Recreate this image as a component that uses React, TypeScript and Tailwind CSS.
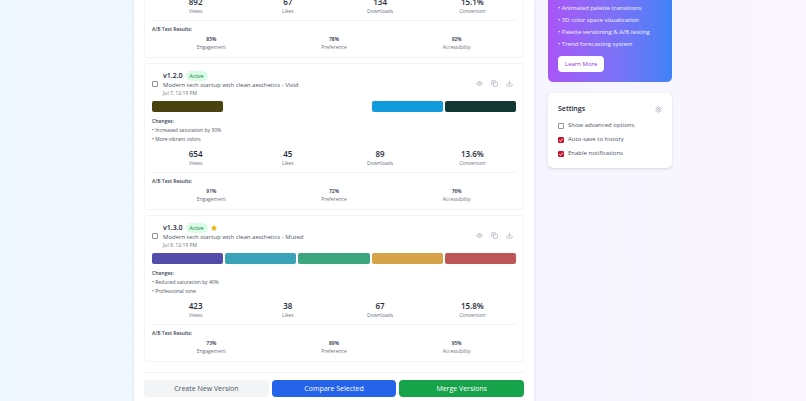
import React from 'react';
import { Copy, Download, Eye, Settings, Star } from 'lucide-react';

interface Metric {
  label: string;
  value: string;
}

interface Version {
  id: string;
  description: string;
  date: string;
  starred: boolean;
  colors: string[];
  changes: string[];
  metrics: Metric[];
  results: Metric[];
}

const toMetrics = (labels: string[], values: string[]): Metric[] =>
  labels.map((label, i) => ({ label, value: values[i] }));

const METRIC_LABELS = ['Views', 'Likes', 'Downloads', 'Conversion'];
const RESULT_LABELS = ['Engagement', 'Preference', 'Accessibility'];

const PREVIOUS = {
  metrics: toMetrics(METRIC_LABELS, ['892', '67', '134', '15.1%']),
  results: toMetrics(RESULT_LABELS, ['85%', '78%', '92%']),
};

const VERSIONS: Version[] = [
  {
    id: 'v1.2.0',
    description: 'Modern tech startup with clean aesthetics - Vivid',
    date: 'Jul 7, 12:19 PM',
    starred: false,
    colors: ['bg-[#4a420f]', 'bg-white', 'bg-white', 'bg-[#0f9bdc]', 'bg-[#123833]'],
    changes: ['Increased saturation by 30%', 'More vibrant colors'],
    metrics: toMetrics(METRIC_LABELS, ['654', '45', '89', '13.6%']),
    results: toMetrics(RESULT_LABELS, ['91%', '72%', '76%']),
  },
  {
    id: 'v1.3.0',
    description: 'Modern tech startup with clean aesthetics - Muted',
    date: 'Jul 9, 12:19 PM',
    starred: true,
    colors: ['bg-[#544caa]', 'bg-[#3aa2b6]', 'bg-[#3ca47f]', 'bg-[#d7a348]', 'bg-[#bd5757]'],
    changes: ['Reduced saturation by 40%', 'Professional tone'],
    metrics: toMetrics(METRIC_LABELS, ['423', '38', '67', '15.8%']),
    results: toMetrics(RESULT_LABELS, ['73%', '89%', '95%']),
  },
];

const FEATURES = [
  'Animated palette transitions',
  '3D color space visualization',
  'Palette versioning & A/B testing',
  'Trend forecasting system',
];

const OPTIONS = [
  { label: 'Show advanced options', checked: false },
  { label: 'Auto-save to history', checked: true },
  { label: 'Enable notifications', checked: true },
];

const ACTIONS = [
  { label: 'Preview', Icon: Eye },
  { label: 'Copy', Icon: Copy },
  { label: 'Download', Icon: Download },
];

const CheckBox: React.FC<{ id: string; label?: string; defaultChecked?: boolean }> = ({ id, label, defaultChecked }) => (
  <span className="relative flex shrink-0">
    <input
      id={id}
      type="checkbox"
      aria-label={label}
      defaultChecked={defaultChecked}
      className="peer size-[6px] appearance-none rounded-[1px] border border-[#8f8f8f] bg-white checked:border-[#c8102a] checked:bg-[#c8102a]"
    />
    <svg className="pointer-events-none absolute inset-0 hidden size-[6px] text-white peer-checked:block" fill="none" viewBox="0 0 12 12" stroke="currentColor">
      <path strokeWidth={2} d="M2.5 6.5l2.5 2.5 4.5-5.5" />
    </svg>
  </span>
);

const Stats: React.FC<{ metrics: Metric[]; results: Metric[] }> = ({ metrics, results }) => (
  <>
    <div className="grid grid-cols-4 gap-[5px] text-center">
      {metrics.map((m) => (
        <div key={m.label}>
          <div className="text-[8px] leading-[11px] font-semibold text-gray-800">{m.value}</div>
          <div className="text-[5px] leading-[8px] text-gray-500">{m.label}</div>
        </div>
      ))}
    </div>
    <div className="mt-[5px] border-t border-gray-100 pt-[4px]">
      <h4 className="text-[5px] leading-[8px] font-semibold text-gray-700">A/B Test Results:</h4>
      <div className="mt-[2px] grid grid-cols-3 gap-[4px] text-center text-[5px] leading-[8px]">
        {results.map((r) => (
          <div key={r.label}>
            <div className="font-semibold text-gray-800">{r.value}</div>
            <div className="text-gray-500">{r.label}</div>
          </div>
        ))}
      </div>
    </div>
  </>
);

const VersionCard: React.FC<{ version: Version }> = ({ version }) => (
  <article className="rounded-[4px] border border-gray-100 px-[7px] py-[6px]">
    <div className="flex items-center justify-between">
      <div className="flex items-center gap-[5px]">
        <CheckBox id={version.id} label={version.id} />
        <div>
          <div className="flex h-[11px] items-center gap-[3px]">
            <h3 className="text-[7px] leading-[11px] font-semibold text-gray-800">{version.id}</h3>
            <span className="rounded-full bg-green-100 px-[4px] text-[5px] leading-[10px] text-green-700">Active</span>
            {version.starred && <Star className="size-[6px] fill-[#eab308] text-[#eab308]" />}
          </div>
          <p className="text-[6px] leading-[9px] text-gray-600">{version.description}</p>
          <p className="text-[5px] leading-[7px] text-gray-500">{version.date}</p>
        </div>
      </div>
      <div className="flex gap-[2px] text-gray-400">
        {ACTIONS.map(({ label, Icon }) => (
          <button key={label} type="button" aria-label={label} className="p-[3px]">
            <Icon className="size-[7px]" />
          </button>
        ))}
      </div>
    </div>

    <div className="mt-[4px] flex gap-[2px]">
      {version.colors.map((color, i) => (
        <div key={i} className={`h-[11px] flex-1 rounded-[2px] ${color}`} />
      ))}
    </div>

    <div className="mt-[5px] mb-[4px] text-[5px] leading-[9px]">
      <h4 className="font-semibold text-gray-700">Changes:</h4>
      <ul className="text-gray-600">
        {version.changes.map((change) => (
          <li key={change}>• {change}</li>
        ))}
      </ul>
    </div>

    <Stats metrics={version.metrics} results={version.results} />
  </article>
);

export default function App() {
  return (
    <div className="h-screen overflow-hidden bg-linear-to-r from-[#eff7ff] via-[#f3f5ff] to-[#faf5ff] font-['Open_Sans','Noto_Sans',sans-serif]">
      <div className="mx-auto grid max-w-[538px] grid-cols-4 items-start gap-[14px]">
        <main className="col-span-3 bg-white px-[10px] pb-[10px] shadow-sm">
          <div className="-mt-1 space-y-[5px]">
            <article className="rounded-b-[4px] border-x border-b border-gray-100 px-[7px] pb-[6px]">
              <Stats metrics={PREVIOUS.metrics} results={PREVIOUS.results} />
            </article>
            {VERSIONS.map((version) => (
              <VersionCard key={version.id} version={version} />
            ))}
          </div>
          <div className="mt-[10px] grid grid-cols-3 gap-[3px] border-t border-gray-100 pt-[7px] text-[7px] leading-[17px]">
            <button type="button" className="rounded-[4px] bg-gray-100 text-gray-600">Create New Version</button>
            <button type="button" className="rounded-[4px] bg-[#2563eb] text-white">Compare Selected</button>
            <button type="button" className="rounded-[4px] bg-[#16a34a] text-white">Merge Versions</button>
          </div>
        </main>

        <aside className="space-y-[11px]">
          <section className="rounded-b-[5px] bg-linear-to-r from-[#a855f7] to-[#3b82f6] px-[10px] pt-[2px] pb-[10px] text-[6px] text-white">
            <ul className="leading-[12px] text-white/90">
              {FEATURES.map((feature) => (
                <li key={feature}>• {feature}</li>
              ))}
            </ul>
            <button type="button" className="mt-[6px] block rounded-[4px] bg-white px-[7px] leading-[16px] font-medium text-[#9333ea]">
              Learn More
            </button>
          </section>

          <section className="rounded-[5px] bg-white p-[10px] shadow-sm">
            <div className="mb-[6px] flex items-center justify-between">
              <h2 className="text-[7px] leading-[12px] font-semibold text-gray-800">Settings</h2>
              <button type="button" aria-label="Settings" className="text-gray-400">
                <Settings className="size-[7px]" />
              </button>
            </div>
            <div className="space-y-[5px]">
              {OPTIONS.map((option, i) => (
                <div key={option.label} className="flex items-center gap-[4px]">
                  <CheckBox id={`option-${i}`} defaultChecked={option.checked} />
                  <label htmlFor={`option-${i}`} className="text-[6px] leading-[9px] text-gray-600">{option.label}</label>
                </div>
              ))}
            </div>
          </section>
        </aside>
      </div>
    </div>
  );
}
